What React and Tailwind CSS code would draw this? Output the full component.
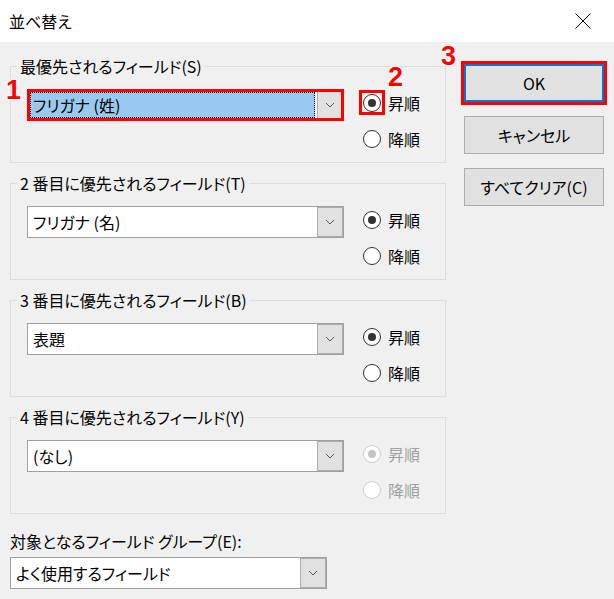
import React from 'react';

const font = "font-['Noto_Sans_CJK_JP','Noto_Sans',sans-serif] [font-feature-settings:'palt']";

const Chevron = () => (
  <svg width="10" height="6" viewBox="0 0 10 6" fill="none">
    <path d="M1 1 L5 5 L9 1" stroke="#5a5a5a" strokeWidth="1" />
  </svg>
);

const Combo = ({ text, selected = false, marked = false }) => (
  <div className="relative flex h-8 w-[317px] border border-[#a0a0a0] bg-white">
    <div className="flex-1 p-[2px]">
      {selected ? (
        <div className="flex h-full items-center border border-dotted border-black bg-[#99c9ef] pl-[2px] text-[16px] leading-5 text-black">
          {text}
        </div>
      ) : (
        <div className="flex h-full items-center border border-transparent pl-[2px] text-[16px] leading-5 text-black">
          {text}
        </div>
      )}
    </div>
    <div className="flex w-[26px] items-center justify-center border border-[#adadad] bg-[#e1e1e1]">
      <Chevron />
    </div>
    {marked && (
      <div className="pointer-events-none absolute -inset-[1px] border-[3px] border-[#ff0000]" />
    )}
  </div>
);

const Radio = ({ label, checked = false, disabled = false, marked = false }) => (
  <div className="flex h-5 items-center">
    <div className="relative">
      <div
        className={
          disabled
            ? 'flex h-[18px] w-[18px] items-center justify-center rounded-full border border-[#cccccc] bg-white'
            : 'flex h-[18px] w-[18px] items-center justify-center rounded-full border border-[#333333] bg-white'
        }
      >
        {checked && (
          <div className={disabled ? 'h-2 w-2 rounded-full bg-[#c4c4c4]' : 'h-2 w-2 rounded-full bg-[#333333]'} />
        )}
      </div>
      {marked && (
        <div className="pointer-events-none absolute -top-[4px] -bottom-[3px] -left-[4px] -right-[4px] border-[3px] border-[#ff0000]" />
      )}
    </div>
    <span className={disabled ? 'ml-[7px] text-[16px] leading-5 text-[#a0a0a0]' : 'ml-[7px] text-[16px] leading-5 text-black'}>
      {label}
    </span>
  </div>
);

const Group = ({ legend, value, selected, disabled, marked }) => (
  <fieldset className="border border-[#dcdcdc] pb-[13px] pl-[16px] pt-[13px]">
    <legend className="-ml-[10px] px-[3px] text-[16px] leading-5 text-black">{legend}</legend>
    <div className="flex">
      <Combo text={value} selected={selected} marked={marked} />
      <div className="ml-[19px] mt-[4px] flex flex-col gap-4">
        <Radio label="昇順" checked disabled={disabled} marked={marked} />
        <Radio label="降順" disabled={disabled} />
      </div>
    </div>
  </fieldset>
);

const Num = ({ children, className }) => (
  <span
    className={`absolute font-['Liberation_Sans',Arial,sans-serif] text-[27px] font-bold leading-none text-[#ff0000] [text-shadow:0_0_2px_#fff,0_0_2px_#fff,1px_1px_0_#fff,-1px_-1px_0_#fff,1px_-1px_0_#fff,-1px_1px_0_#fff] ${className}`}
  >
    {children}
  </span>
);

export default function App() {
  return (
    <div className={`relative h-[599px] w-[614px] overflow-hidden bg-[#f0f0f0] ${font}`}>
      <div className="flex h-[42px] items-center justify-between bg-white pl-[9px] pr-[23px]">
        <span className="text-[16px] leading-5 text-black">並べ替え</span>
        <svg width="16" height="16" viewBox="0 0 16 16">
          <path d="M0.5 0.5 L15.5 15.5 M15.5 0.5 L0.5 15.5" stroke="#000" strokeWidth="1" />
        </svg>
      </div>

      <div className="flex px-[10px] pt-[14px]">
        <div className="flex w-[436px] flex-col">
          <div className="flex flex-col gap-[10px]">
            <Group legend="最優先されるフィールド(S)" value="フリガナ (姓)" selected marked />
            <Group legend="2 番目に優先されるフィールド(T)" value="フリガナ (名)" />
            <Group legend="3 番目に優先されるフィールド(B)" value="表題" />
            <Group legend="4 番目に優先されるフィールド(Y)" value="(なし)" disabled />
          </div>
          <div className="mt-[17px] text-[16px] leading-5 text-black">対象となるフィールド グループ(E):</div>
          <div className="mt-[6px]">
            <Combo text="よく使用するフィールド" />
          </div>
        </div>

        <div className="ml-[18px] flex flex-col gap-[14px] pt-[8px]">
          <button className="h-[38px] w-[140px] border-2 border-[#0078d7] bg-[#e1e1e1] text-[16px] text-black outline-[3px] outline-solid outline-[#ff0000]">
            OK
          </button>
          <button className="h-[38px] w-[140px] border border-[#adadad] bg-[#e1e1e1] text-[16px] text-black">
            キャンセル
          </button>
          <button className="h-[38px] w-[140px] border border-[#adadad] bg-[#e1e1e1] text-[16px] text-black">
            すべてクリア(C)
          </button>
        </div>
      </div>

      <Num className="left-[6px] top-[77px]">1</Num>
      <Num className="left-[388px] top-[64px]">2</Num>
      <Num className="left-[441px] top-[43px]">3</Num>
    </div>
  );
}
